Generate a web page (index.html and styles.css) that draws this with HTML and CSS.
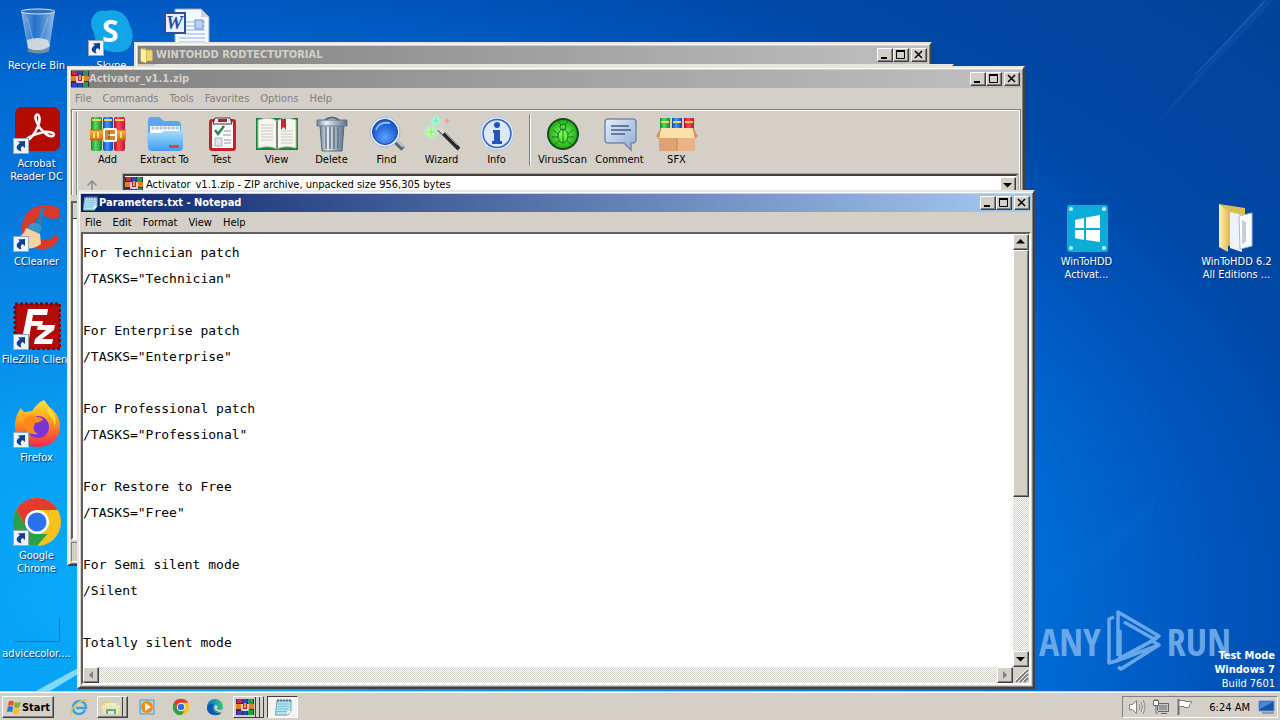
FILE: index.html
```html
<!DOCTYPE html>
<html lang="en">
<head>
<meta charset="utf-8">
<meta name="viewport" content="width=device-width, initial-scale=1">
<title>Desktop</title>
<link rel="stylesheet" href="styles.css">
</head>
<body>
<svg class="sprite" aria-hidden="true">
  <defs>
    <linearGradient id="g-red" x2="1" y2="0"><stop stop-color="#a80f22"/><stop offset=".4" stop-color="#ff4a55"/><stop offset="1" stop-color="#c01530"/></linearGradient>
    <linearGradient id="g-blue" x2="1" y2="0"><stop stop-color="#0d47b5"/><stop offset=".4" stop-color="#3f9bff"/><stop offset="1" stop-color="#0d47b5"/></linearGradient>
    <linearGradient id="g-green" x2="1" y2="0"><stop stop-color="#0b8a2a"/><stop offset=".4" stop-color="#5bdc5b"/><stop offset="1" stop-color="#0b8a2a"/></linearGradient>
    <linearGradient id="g-belt" x2="0" y2="1"><stop stop-color="#ffb43a"/><stop offset="1" stop-color="#d86a0c"/></linearGradient>
    <linearGradient id="g-folder" x2="0" y2="1"><stop stop-color="#a4dcff"/><stop offset="1" stop-color="#3e9cf0"/></linearGradient>
    <linearGradient id="g-metal" x2="1" y2="0"><stop stop-color="#6f8296"/><stop offset=".3" stop-color="#e8f0f6"/><stop offset=".6" stop-color="#a9b8c6"/><stop offset="1" stop-color="#5f7286"/></linearGradient>
    <linearGradient id="g-yellow" x2="1" y2="0"><stop stop-color="#fff3b0"/><stop offset="1" stop-color="#e3c45a"/></linearGradient>
    <linearGradient id="g-fox" x2="0" y2="1"><stop stop-color="#ffe23a"/><stop offset=".45" stop-color="#ff9a1c"/><stop offset="1" stop-color="#f0264e"/></linearGradient>
    <linearGradient id="g-bin" x2="1" y2="0"><stop stop-color="#b5cfea" stop-opacity=".8"/><stop offset=".4" stop-color="#4a86cf" stop-opacity=".5"/><stop offset="1" stop-color="#c9dcf0" stop-opacity=".75"/></linearGradient>
    <linearGradient id="g-bubble" x2="1" y2="1"><stop stop-color="#e6effa"/><stop offset="1" stop-color="#8eaad2"/></linearGradient>
    <linearGradient id="g-edge" x2="1" y2="0"><stop stop-color="#0a6cd0"/><stop offset="1" stop-color="#38c878"/></linearGradient>
    <radialGradient id="g-lens" cy=".7"><stop stop-color="#5fa2ff"/><stop offset="1" stop-color="#1c5fd0"/></radialGradient>
    <radialGradient id="g-virus"><stop stop-color="#8cff5c"/><stop offset="1" stop-color="#22ae1c"/></radialGradient>
    <radialGradient id="g-glow"><stop stop-color="#fff"/><stop offset=".4" stop-color="#a8ffc0"/><stop offset="1" stop-color="#a8ffc0" stop-opacity="0"/></radialGradient>
    <symbol id="shortcut" viewBox="0 0 16 16"><rect x=".5" y=".5" width="15" height="15" fill="#eef3fa" stroke="#9aa8bb"/><path d="M5 3.500 12 3v7L9.600 8Q6.500 9.500 8.500 13.500 3 12 3.800 8.500 4.500 6.500 6.800 5.500z" fill="#103f94"/></symbol>
    <symbol id="books" viewBox="0 0 36 36">
      <rect x="1" y="1" width="11" height="34" rx="2" fill="url(#g-green)"/><rect x="13" y="1" width="10" height="34" rx="2" fill="url(#g-blue)"/><rect x="24" y="1" width="11" height="34" rx="2" fill="url(#g-red)"/>
      <path d="M2 4h9M14 4h8M25 4h9" stroke="#ffd24a" stroke-width="2"/>
      <path d="M0 14h36v10H0z" fill="url(#g-belt)"/><path d="M0 14h36M0 24h36" stroke="#c06a18"/><path d="M4 16v6M8 16v6M31 16v6" stroke="#ffe08a" stroke-width="2"/>
      <rect x="14" y="13" width="12" height="12" rx="1" fill="#d8882c" stroke="#fff" stroke-width="2"/><path d="M18 19h9" stroke="#fff" stroke-width="2"/><path d="M19 15v8" stroke="#6b3a12"/>
    </symbol>
    <symbol id="rar" viewBox="0 0 18 16">
      <path d="M0 0h18v16H0z" fill="#40245c"/><path d="M1 0h5v4H1z" fill="#d61f52"/><path d="M7 0h4v16H7z" fill="#2449c8"/><path d="M12 0h5v5h-5zM12 11h5v5h-5z" fill="#1fa044"/><path d="M1 12h5v4H1z" fill="#2a4bd0"/><path d="M0 5h18v5H0z" fill="#b62530"/><path d="M0 5h5v5H0zM13 5h5v5h-5z" fill="#e08124"/><path d="M6 5v6h6V5" fill="none" stroke="#fff" stroke-width="1.500"/><path d="M9 4v5" stroke="#f5c84c" stroke-width="1.500"/>
    </symbol>
    <symbol id="note" viewBox="0 0 18 18"><path d="M3 2.500h14v10L14 17H1.500z" fill="#b4e4f0" stroke="#6f9db0"/><path d="M4 6h11M4 8.500h11M3.500 11H14M3 13.500h10" stroke="#7dbdd6"/><path d="M4 1v3M7 1v3M10 1v3M13 1v3M16 1v3" stroke="#45606c"/><path d="m13 17 .5-4H17z" fill="#fff"/></symbol>
    <symbol id="folder" viewBox="0 0 16 18"><path d="M1 2l5-1 2 2h6v13H5l-4 1z" fill="#d8b64a"/><path d="M1 2l6 2v14l-6-2z" fill="#fff0a0"/><path d="M8 4h6v11H8z" fill="#f0d47a"/></symbol>
    <symbol id="chrome" viewBox="0 0 48 48"><circle cx="24" cy="24" r="24" fill="#f8c21e"/><path d="M3.200 12A24 24 0 0 1 44.800 12H24L13.600 30z" fill="#e33b2e"/><path d="M3.200 12 13.600 30 24 36h10.400L24 48A24 24 0 0 1 3.200 12z" fill="#28a148"/><circle cx="24" cy="24" r="12" fill="#fff"/><circle cx="24" cy="24" r="9.500" fill="#2b72ea"/></symbol>
    <symbol id="min" viewBox="0 0 16 14"><path d="M4 10h6" stroke="#000" stroke-width="2"/></symbol>
    <symbol id="max" viewBox="0 0 16 14"><path d="M3.500 2.500h8v8h-8z" fill="none" stroke="#000"/><path d="M3 3h9" stroke="#000" stroke-width="2"/></symbol>
    <symbol id="close" viewBox="0 0 16 14"><path d="m4 3 7 7M11 3l-7 7" stroke="#000" stroke-width="1.500"/></symbol>
    <symbol id="up" viewBox="0 0 16 16"><path d="M7.500 5 12 9.500H3z"/></symbol>
    <symbol id="down" viewBox="0 0 16 16"><path d="M3 6h9l-4.500 4.500z"/></symbol>
    <symbol id="left" viewBox="0 0 16 16"><path d="M10 4v8L6 8z" fill="#808080"/></symbol>
    <symbol id="right" viewBox="0 0 16 16"><path d="M6 4v8l4-4z" fill="#808080"/></symbol>
  </defs>
</svg>

<main class="desktop">
  <svg class="streaks" viewBox="0 0 1280 691" preserveAspectRatio="none" aria-hidden="true">
    <path d="M1035 575Q1110 540 1160 490L1150 520Q1100 570 1035 600z" fill="#2a90f0" opacity=".06"/>
    <path d="M1150 130 1262 0h12L1180 100z" fill="#6ab4ff" opacity=".07"/>
    <path d="M1195 75 1265 1" stroke="#9cccff" opacity=".25"/>
    <path d="M36 691 78 668v6L50 691z" fill="#a8ecff" opacity=".75"/>
  </svg>

  <div class="icons">
    <a class="shortcut" href="#bin">
      <svg viewBox="0 0 48 48"><path d="M8 3h34l-6 39q-11 5-21 0z" fill="url(#g-bin)"/><path d="M14 32q11-4 21 0l2 6q-12 8-22 2z" fill="#e4e6df" opacity=".85"/><ellipse cx="25" cy="3.500" rx="17" ry="2.500" fill="#3b6fae" stroke="#d6e6f5"/><path d="M15 42q10 4 21 0" fill="none" stroke="#7c8b99" stroke-width="3"/><path d="m14 10 6 22M35 10l-7 20" stroke="#bcd7f3" opacity=".5"/></svg>
      <span>Recycle Bin</span></a>
    <a class="shortcut" href="#skype">
      <svg viewBox="0 0 48 48"><path d="M17 3q20-4 25 15 4 6 2 14-2 13-16 12Q8 44 6 25 0 14 6 7q4-5 11-4z" fill="#12a5e8"/><text class="skype-letter" x="14" y="34">S</text><use href="#shortcut" y="32" width="16" height="16"/></svg>
      <span>Skype</span></a>
    <a class="shortcut" href="#word" aria-label="Word document">
      <svg viewBox="0 0 48 48"><path d="M12 1h26l8 8v38H12z" fill="#f4f8ff" stroke="#8fa4c4"/><path d="M38 1v8h8z" fill="#c4d3e8"/><path d="M22 14h20M22 18h20M22 22h20M22 26h20M16 30h26M16 34h26M16 38h26" stroke="#8db0e0"/><path d="M32 12h8v9h-8z" fill="#b8d0f4" stroke="#6a94d4"/><path d="M2 5h20v20H2z" fill="#eaf1fd" stroke="#2b4d9e" stroke-width="2"/><text class="word-letter" x="3" y="21">W</text></svg></a>
    <a class="shortcut col-1" href="#acrobat">
      <svg viewBox="0 0 48 48"><rect x="2" y="1" width="45" height="44" rx="7" fill="#b30b00"/><path d="M13 34c5 1 16-16 13-24-1-3-5-1-3 4 2 8 12 18 17 16 4-3-6-6-13-3-8 2-14 6-14 7z" fill="none" stroke="#fff" stroke-width="2.500"/><use href="#shortcut" y="32" width="16" height="16"/></svg>
      <span>Acrobat Reader DC</span></a>
    <a class="shortcut col-1" href="#ccleaner">
      <svg viewBox="0 0 48 48"><path d="M46 5 46 14 38 15Q28 8 22 18q-5 16 8 18 8 1 12-6l4 5Q40 46 28 45 8 44 9 22 12 2 32 1q7-1 14 4z" fill="#d8392a"/><path d="m30 4-6 24" stroke="#2f7fae" stroke-width="4"/><path d="M17 20q8-4 12 4l-3 6-13-4z" fill="#3a93c2"/><path d="M13 24 27 30l1 10q-8 6-18 4Q5 37 2 35q8-2 11-11z" fill="#f4d3a0"/><use href="#shortcut" y="32" width="16" height="16"/></svg>
      <span>CCleaner</span></a>
    <a class="shortcut col-1" href="#filezilla">
      <svg viewBox="0 0 48 48"><rect x="2" y="2" width="45" height="45" fill="#b30a0a" stroke="#7d0505" stroke-width="3" stroke-dasharray="3 2"/><path d="M15 7h20l-1 6H20l-1 6h11l-1 5H18l-2 13H9z" fill="#fff"/><path d="M25 23h17l-1 5-12 9h11l-1 5H21l1-5 11-9h-9z" fill="#fff"/><use href="#shortcut" y="32" width="16" height="16"/></svg>
      <span class="nowrap">FileZilla Client</span></a>
    <a class="shortcut col-1" href="#firefox">
      <svg viewBox="0 0 48 48"><path d="M31 0q3 6 8 9 9 8 8 20-3 17-22 18Q5 46 2 29 1 17 8 8q1 3 4 4l7-1q5-8 12-11z" fill="url(#g-fox)"/><circle cx="25" cy="27" r="11" fill="#7a35d5"/><path d="M12 18q8-5 12-1 5 0 6 3-5 3-8 3-4 8 3 11-11 2-14-8z" fill="#ff8a1a"/><path d="M31 0q2 12 8 18 3 6 2 10 4-10-2-17" fill="#ffd93a"/><use href="#shortcut" y="32" width="16" height="16"/></svg>
      <span>Firefox</span></a>
    <a class="shortcut col-1" href="#chrome-app">
      <svg viewBox="0 0 48 48"><use href="#chrome" width="48" height="48"/><use href="#shortcut" y="32" width="16" height="16"/></svg>
      <span>Google Chrome</span></a>
    <a class="shortcut col-1" href="#advice">
      <svg viewBox="0 0 48 48"><path d="M2 45.500h44.500V22" fill="none" stroke="#0c5f9c" opacity=".75"/></svg>
      <span class="nowrap">advicecolor....</span></a>
    <a class="shortcut col-15" href="#activator">
      <svg viewBox="0 0 48 48"><rect x="4" y="1" width="41" height="47" rx="2" fill="#0bacd8"/><g fill="#c9f4ff"><circle cx="8" cy="5" r="2"/><circle cx="41" cy="5" r="2"/><circle cx="8" cy="44" r="2"/><circle cx="41" cy="44" r="2"/></g><path d="m12 16 9-2v10h-9zM23 13.500 37 11v13H23zM12 26h9v10l-9-2zM23 26h14v12l-14-2z" fill="#fff"/></svg>
      <span>WinToHDD Activat...</span></a>
    <a class="shortcut col-17" href="#editions">
      <svg viewBox="0 0 48 48"><path d="m6 0 26 4v32l-22 8z" fill="#d9bd55"/><path d="m17 8 12 3v37l-12-4z" fill="#eef3fb"/><path d="m26 12 13-3v33l-12 3z" fill="#fdfeff" stroke="#aab9d0"/><path d="M29 16v24l4-2V18z" fill="#c5cfe0"/><path d="m6 0 9 7v41l-9-5z" fill="url(#g-yellow)"/></svg>
      <span>WinToHDD 6.2 All Editions ...</span></a>
  </div>

  <div class="brand" aria-label="ANY RUN"><span>ANY</span>
    <svg viewBox="0 0 56 62" aria-hidden="true"><g fill="none" stroke="currentColor" stroke-width="3.500" stroke-linejoin="round"><path d="M8 7 3 9v44l7-2 41-23"/><path d="M12 46V2l41 24-5 3-30-17"/><path d="M10 51 53 35 15 59l-3-2M53 35 46 31 14 48V20"/></g></svg>
    <span>RUN</span></div>
  <div class="build"><strong>Test Mode</strong><strong>Windows 7</strong><span>Build 7601</span></div>

  <section class="window explorer" aria-label="WINTOHDD RODTECTUTORIAL">
    <header class="titlebar"><svg class="title-icon"><use href="#folder"/></svg><h2>WINTOHDD RODTECTUTORIAL</h2>
      <button aria-label="Minimize"><svg><use href="#min"/></svg></button><button aria-label="Maximize"><svg><use href="#max"/></svg></button><button class="close" aria-label="Close"><svg><use href="#close"/></svg></button></header>
  </section>
  <section class="window hidden-window" aria-label="Background window"></section>

  <section class="window archive" aria-label="Activator_v1.1.zip">
    <header class="titlebar"><svg class="title-icon"><use href="#rar"/></svg><h2>Activator_v1.1.zip</h2>
      <button aria-label="Minimize"><svg><use href="#min"/></svg></button><button aria-label="Maximize"><svg><use href="#max"/></svg></button><button class="close" aria-label="Close"><svg><use href="#close"/></svg></button></header>
    <nav class="menu faded"><button>File</button><button>Commands</button><button>Tools</button><button>Favorites</button><button>Options</button><button>Help</button></nav>
    <div class="rebar">
      <div class="toolbar">
        <button class="tool"><svg viewBox="0 0 36 36"><use href="#books"/></svg>Add</button>
        <button class="tool wide"><svg viewBox="0 0 36 36"><path d="M1 5q0-4 4-4h7l5 4h13q4 0 4 4v20H1z" fill="#5aa5f5"/><path d="M3 10h30v12H3z" fill="#fff"/><path d="M4 12h28M6 10v4M10 10v4M14 10v4M18 10v4M22 10v4M26 10v4M30 10v4" stroke="#98b6dc"/><path d="M0 19q0-2 2-2h12l3-2h17q2 0 2 2v14q0 4-4 4H5q-4 0-4-4z" fill="url(#g-folder)"/><path d="M22 29h10v3H22z" fill="#d24a38"/></svg>Extract To</button>
        <button class="tool"><svg viewBox="0 0 36 36"><rect x="5" y="3" width="27" height="32" rx="3" fill="#c5222e"/><path d="M8 6h21v26H8z" fill="#f8fafb"/><path d="M11 2h15l2 6H9z" fill="#e8eaec" stroke="#5a3038"/><path d="M14 3h9v3h-9z" fill="#9c2834"/><path d="m11 14 3 4 6-8" fill="none" stroke="#2d8450" stroke-width="2.500"/><path d="M20 15h7M19 19h8M20 24h7M20 27h7" stroke="#8d98a2"/><path d="M11 22h7v8h-7z" fill="#dde3e8" stroke="#aab4bc"/></svg>Test</button>
        <button class="tool"><svg class="book" viewBox="0 0 42 36"><path d="M0 2h42v32H0z" fill="#16853a"/><path d="M2 4q12-4 19 1 7-5 19-1v28q-12-3-19 1-7-4-19-1z" fill="#f6f6ee" stroke="#b7bfae"/><path d="M21 5v28" stroke="#7c8478" stroke-width="2"/><path d="M5 9h12M5 12h12M5 15h12M5 18h12M5 21h12M5 24h12M25 15h12M25 18h12M25 21h12M25 24h12M25 27h12" stroke="#c5cabf"/><path d="M25 3h5v11l-2.500-3-2.500 3z" fill="#cf2438"/></svg>View</button>
        <button class="tool"><svg viewBox="0 0 36 36"><path d="M6 9h24l-2 26H8z" fill="url(#g-metal)" stroke="#59697a"/><path d="M12 11v22M16 11v22M20 11v22M24 11v22" stroke="#637589" stroke-width="1.500"/><path d="M3 4h30v6H3z" fill="url(#g-metal)" stroke="#64788c"/><path d="M11 4q7-5 14 0" fill="none" stroke="#54667a" stroke-width="2"/></svg>Delete</button>
        <button class="tool"><svg viewBox="0 0 36 36"><path d="m24 23 10 10" stroke="#59636c" stroke-width="5"/><path d="m25 22 9 9" stroke="#bbc4cc" stroke-width="2"/><circle cx="16" cy="16" r="15" fill="#eaf2fb" stroke="#a2b5cc"/><circle cx="16" cy="16" r="12.500" fill="url(#g-lens)" stroke="#13409a"/><path d="M7 14q3-9 14-7" fill="none" stroke="#86b8ff" stroke-width="2"/></svg>Find</button>
        <button class="tool"><svg viewBox="0 0 36 36"><circle cx="7" cy="16" r="8" fill="url(#g-glow)"/><circle cx="12" cy="5" r="6" fill="url(#g-glow)"/><path d="m7 11 1 4 4 1-4 1-1 4-1-4-4-1 4-1z" fill="#a9ee45"/><path d="m12 1 1 3 3 1-3 1-1 3-1-3-3-1 3-1z" fill="#6be8ec"/><path d="m23 2 1 2 2 1-2 1-1 2-1-2-2-1 2-1z" fill="#f598a2"/><path d="m15 13 20 20" stroke="#282828" stroke-width="4"/><path d="m15 12 5 5" stroke="#d8d8d8" stroke-width="4"/><path d="m20 16 13 13" stroke="#8c8c8c"/></svg>Wizard</button>
        <button class="tool"><svg viewBox="0 0 36 36"><circle cx="18" cy="17.500" r="16.500" fill="#e7effc" stroke="#b5c7e8"/><circle cx="18" cy="17.500" r="14" fill="#dce8fb" stroke="#3262c4" stroke-width="1.500"/><circle cx="18" cy="9" r="3" fill="#2453bc"/><path d="M14 14h7v11h2v3H13v-3h2v-8h-1z" fill="#2453bc"/></svg>Info</button>
        <span class="divider"></span>
        <button class="tool"><svg viewBox="0 0 36 36"><circle cx="18" cy="18" r="16" fill="#164c24"/><circle cx="18" cy="18" r="14" fill="url(#g-virus)"/><g stroke="#12791b" fill="none"><ellipse cx="18" cy="20" rx="5" ry="7"/><circle cx="18" cy="11" r="3"/><path d="M18 14v13M13 18 8 14M13 21H7M14 25l-5 4M23 18l5-4M23 21h6M22 25l5 4M16 9l-3-4M20 9l3-4"/></g></svg>VirusScan</button>
        <button class="tool wide"><svg viewBox="0 0 36 36"><path d="M6 3h25q3 0 3 3v17q0 4-3 4h-2v7l-7-7H6q-3 0-3-4V6q0-3 3-3z" fill="url(#g-bubble)" stroke="#7289ae" stroke-width="1.500"/><path d="M9 10h18M9 14h20M9 18h14" stroke="#455d85" stroke-width="1.500"/></svg>Comment</button>
        <button class="tool"><svg class="book" viewBox="0 0 42 36"><path d="M4 2h10v14H4z" fill="url(#g-green)"/><path d="M16 2h10v14H16z" fill="url(#g-blue)"/><path d="M28 2h10v14H28z" fill="url(#g-red)"/><path d="M5 6h8M17 6h8M29 6h8" stroke="#ffd84f" stroke-width="2"/><path d="M3 17h36v18H3z" fill="#e0a270"/><path d="M21 17h18v18H21z" fill="#edb387"/><path d="M5 12h32l2 10H3z" fill="#fbe0aa"/><path d="M5 12 0 20l3 3M37 12l5 8-3 3" fill="#d99257"/><path d="M21 22v13" stroke="#c98555"/></svg>SFX</button>
      </div>
      <div class="address-row">
        <button class="up-level" aria-label="Up one level"><svg viewBox="0 0 16 16"><path d="M8 15V4M3.500 8.500 8 4l4.500 4.500" fill="none" stroke="#8c8c8c" stroke-width="1.500"/></svg></button>
        <div class="address"><svg class="title-icon"><use href="#rar"/></svg><input aria-label="Archive path" value="Activator_v1.1.zip - ZIP archive, unpacked size 956,305 bytes" readonly><button class="arrow" aria-label="Show paths"><svg><use href="#down"/></svg></button></div>
      </div>
    </div>
    <div class="file-list"><div class="list-head"></div></div>
    <footer class="status"></footer>
  </section>

  <section class="window notepad" aria-label="Parameters.txt - Notepad">
    <header class="titlebar active"><svg class="title-icon"><use href="#note"/></svg><h2>Parameters.txt - Notepad</h2>
      <button aria-label="Minimize"><svg><use href="#min"/></svg></button><button aria-label="Maximize"><svg><use href="#max"/></svg></button><button class="close" aria-label="Close"><svg><use href="#close"/></svg></button></header>
    <nav class="menu"><button>File</button><button>Edit</button><button>Format</button><button>View</button><button>Help</button></nav>
    <div class="editor">
      <textarea aria-label="Document text" spellcheck="false" wrap="off">For Technician patch
/TASKS="Technician"

For Enterprise patch
/TASKS="Enterprise"

For Professional patch
/TASKS="Professional"

For Restore to Free
/TASKS="Free"

For Semi silent mode
/Silent

Totally silent mode</textarea>
      <div class="scroll vertical"><button class="arrow" aria-label="Scroll up"><svg><use href="#up"/></svg></button><div class="thumb"></div><button class="arrow end" aria-label="Scroll down"><svg><use href="#down"/></svg></button></div>
      <div class="scroll horizontal"><button class="arrow" aria-label="Scroll left"><svg><use href="#left"/></svg></button><button class="arrow end" aria-label="Scroll right"><svg><use href="#right"/></svg></button></div>
      <svg class="grip" viewBox="0 0 16 16" aria-hidden="true"><path d="M3 15 15 3M7 15l8-8M11 15l4-4" stroke="#808080" stroke-width="2"/><path d="M1 15 15 1M5 15 15 5M9 15l6-6" stroke="#fff"/></svg>
    </div>
  </section>
</main>

<footer class="taskbar">
  <button class="start"><svg viewBox="0 0 18 18"><path d="M3 3q3-2 6 0L8 8Q5 6 2 8z" fill="#ee5526"/><path d="M10 3q3 2 7 0l-2 6q-3 2-6 0z" fill="#7ab837"/><path d="M2 9q3-2 6 0l-1 6q-3-2-6 0z" fill="#3278d2"/><path d="M9 10q3 2 6 0l-1 6q-3 2-6 0z" fill="#fbbb28"/></svg>Start</button>
  <div class="apps">
    <button aria-label="Internet Explorer"><svg viewBox="0 0 18 18"><path d="M15 12q-2 4-6 4-6 0-6-7 1-6 7-6 6 1 6 7H6" fill="none" stroke="#3ba3e4" stroke-width="2.500"/><path d="M2 16Q-1 12 8 5q8-5 9-2" fill="none" stroke="#f0c33b" stroke-width="1.500"/></svg></button>
    <button class="open stack" aria-label="File Explorer"><svg viewBox="0 0 18 18"><path d="M1 3h6l1 2h8v11H1z" fill="#e9cd6b"/><path d="M3 5h12v7H3z" fill="#dff0de"/><path d="M0 7h18l-1 9H1z" fill="#f7e6a0"/><path d="M5 16v-4h8v4" fill="none" stroke="#4eabc5" stroke-width="2"/></svg></button>
    <button aria-label="Media Player"><svg viewBox="0 0 18 18"><path d="M2 2h14v14H2z" fill="#a9d6ee" stroke="#4a9cc4"/><circle cx="9" cy="9" r="6" fill="#f28b14"/><path d="M7 5v8l6-4z" fill="#fff"/></svg></button>
    <button aria-label="Chrome"><svg viewBox="-2 -2 52 52"><use href="#chrome" width="48" height="48"/></svg></button>
    <button aria-label="Edge"><svg viewBox="0 0 18 18"><circle cx="9" cy="9" r="8" fill="url(#g-edge)"/><path d="M8 6q-4 7 3 9 3 1 5-1-3 4-8 3-7-1-7-7 2-5 7-4z" fill="#0a57b0"/><path d="M9 7q4 0 2 4 3 2 6 0l1 3q-4 1-7-1-4-2-2-6z" fill="#d4d0c8"/></svg></button>
    <button class="open stack double" aria-label="WinRAR"><svg viewBox="0 0 18 18"><use href="#rar" y="1" width="18" height="16"/></svg></button>
    <button class="pressed" aria-label="Notepad"><svg viewBox="0 0 18 18"><use href="#note" width="18" height="18"/></svg></button>
  </div>
  <div class="tray">
    <svg viewBox="0 0 18 18"><path d="M1.500 6.500h3l4-4v13l-4-4h-3z" fill="#fff" stroke="#808080"/><path d="M11 6q2 3 0 6M13 4q3 5 0 10M15 2q4 7 0 14" fill="none" stroke="#909090"/></svg>
    <svg viewBox="0 0 18 18"><path d="M5.500 5.500h11v8h-11z" fill="#c8c8c8" stroke="#666"/><path d="M7 7h8v5H7z" fill="#999"/><path d="M1.500 2.500h5v5h-5zM3 1v2M5 1v2M4 8v7h2M9 15.500h6" fill="#fff" stroke="#666"/></svg>
    <svg viewBox="0 0 18 18"><path d="M2.500 1v16" stroke="#707070" stroke-width="2"/><path d="M3 2.500h6v1h7q-3 3-3 6H8v-1H3z" fill="#fff" stroke="#808080"/></svg>
    <time>6:24 AM</time>
    <button class="show-desktop" aria-label="Show desktop"><svg viewBox="0 0 18 18"><path d="M1 3h15v10H1z" fill="#1651aa" stroke="#6c94c8"/><path d="M2 4h13L2 11z" fill="#4289dc"/><path d="M4 15h12" stroke="#8e9cab" stroke-width="2"/></svg></button>
  </div>
</footer>
</body>
</html>
```
FILE: styles.css
```css
* { box-sizing: border-box; }
html, body { height: 100%; margin: 0; }
body {
  display: grid;
  grid-template-rows: minmax(0, 1fr) 29px;
  overflow: hidden;
  color: #000;
  font: 11px/13px Tahoma, "DejaVu Sans Condensed", "DejaVu Sans", sans-serif;
}
button, input, textarea { margin: 0; padding: 0; border: 0; border-radius: 0; background: none; color: inherit; font: inherit; }
button { display: flex; align-items: center; justify-content: center; }
h2 { margin: 0; font-size: 11px; line-height: 18px; }
.sprite { position: absolute; width: 0; height: 0; }

.desktop {
  position: relative;
  overflow: hidden;
  background: radial-gradient(ellipse 97% 100% at 10% 86%, #08aafa 0, #08a0f4 22%, #0788e6 42%, #0676dc 60%, #0068d2 76%, #0055bc 88%, #0048a6 100%, #00439a 125%);
}
.streaks { position: absolute; inset: 0; width: 100%; height: 100%; }

.icons {
  position: relative;
  display: grid;
  grid-template-columns: repeat(17, 75px);
  grid-auto-rows: 98px;
  grid-auto-flow: row dense;
  margin-left: -1px;
  padding-top: 8px;
}
.shortcut {
  display: flex;
  flex-direction: column;
  align-items: center;
  gap: 3px;
  color: #fff;
  text-align: center;
  text-decoration: none;
  text-shadow: 1px 1px 1px #003070;
}
.shortcut svg { width: 48px; height: 48px; flex: none; }
.shortcut span { width: 74px; }
.shortcut .nowrap { white-space: nowrap; }
.col-1 { grid-column: 1; }
.col-15 { grid-column: 15; grid-row: 3; }
.col-17 { grid-column: 17; grid-row: 3; }
.skype-letter { fill: #fff; font: bold 30px "Open Sans", sans-serif; text-shadow: none; }
.word-letter { fill: #2b4d9e; font: italic bold 19px "Liberation Serif", serif; text-shadow: none; }

.brand {
  position: absolute;
  right: 49px;
  bottom: 18px;
  display: flex;
  align-items: center;
  gap: 5px;
  color: #83b9f0;
  opacity: .8;
  font: 38px/64px "Liberation Sans Narrow", "Open Sans Condensed", "DejaVu Sans Condensed", sans-serif;
}
.brand svg { width: 56px; height: 62px; }
.build {
  position: absolute;
  right: 5px;
  bottom: 0;
  display: flex;
  flex-direction: column;
  align-items: flex-end;
  color: #fff;
  line-height: 14px;
}

.window {
  position: absolute;
  display: flex;
  flex-direction: column;
  padding: 2px;
  border: 2px solid;
  border-color: #e8e5de #404040 #404040 #e8e5de;
  background: #d4d0c8;
  box-shadow: inset 1px 1px #fff, inset -1px -1px #808080;
}
.explorer { top: 42px; right: 348px; bottom: 140px; left: 134px; }
.hidden-window { top: 64px; right: 326px; bottom: 140px; left: 155px; }
.archive { top: 66px; right: 255px; bottom: 125px; left: 67px; }
.notepad { top: 190px; right: 245px; bottom: 2px; left: 77px; }

.titlebar {
  display: flex;
  flex: none;
  align-items: center;
  height: 18px;
  padding-right: 1px;
  background: linear-gradient(90deg, #808080, #c0c0c0);
  color: #d4d0c8;
}
.titlebar.active { background: linear-gradient(90deg, #0a246a, #a6caf0); color: #fff; }
.titlebar h2 { flex: 1; }
.title-icon { width: 18px; height: 16px; flex: none; }
.titlebar button, .arrow {
  width: 16px;
  height: 14px;
  border: 1px solid;
  border-color: #fff #404040 #404040 #fff;
  background: #d4d0c8;
  box-shadow: inset -1px -1px #808080;
}
.titlebar button svg { width: 16px; height: 14px; flex: none; }
.titlebar .close { margin-left: 2px; }

.menu { display: flex; flex: none; gap: 11px; height: 20px; padding-left: 4px; }
.faded { color: #808080; }

.rebar { flex: none; margin: 1px 0 0; padding: 2px 2px 0 4px; border: 1px solid #808080; border-bottom: 0; box-shadow: inset 1px 1px #fff, inset -1px 0 #fff; }
.toolbar { display: flex; height: 62px; padding-left: 3px; border-left: 1px solid #808080; box-shadow: inset 1px 0 #fff; }
.tool { flex-direction: column; justify-content: flex-start; gap: 1px; width: 55px; padding-top: 4px; }
.tool.wide { width: 59px; }
.tool svg { width: 36px; height: 36px; }
.tool .book { width: 42px; }
.divider { width: 2px; height: 52px; margin: 2px 4px 2px 5px; border-left: 1px solid #808080; background: #fff; }
.address-row { display: flex; height: 21px; border-left: 1px solid #808080; box-shadow: inset 1px 0 #fff; }
.up-level { width: 30px; }
.up-level svg { width: 16px; height: 16px; }
.address { display: flex; flex: 1; align-items: center; margin-left: 16px; border: 2px solid; border-color: #404040 #d4d0c8 #d4d0c8 #404040; background: #fff; outline: 1px solid #aaa69e; }
.address input { flex: 1; padding-left: 3px; }
.arrow { width: 16px; height: 16px; flex: none; }
.arrow svg { width: 16px; height: 16px; flex: none; }
.file-list { flex: 1; margin-top: 6px; border: 2px solid; border-color: #606060 #fff #fff #606060; background: #fff; }
.list-head { height: 16px; border-bottom: 1px solid #404040; background: #d4d0c8; }
.status { height: 20px; flex: none; margin-top: 2px; border: 1px solid; border-color: #808080 #fff #fff #808080; }

.editor {
  display: grid;
  flex: 1;
  grid-template: minmax(0, 1fr) 16px / minmax(0, 1fr) 16px;
  min-height: 0;
  border: 2px solid;
  border-color: #606060 #fff #fff #606060;
  background: #d4d0c8;
}
.editor textarea {
  width: 100%;
  height: 100%;
  padding-top: 6px;
  overflow: hidden;
  resize: none;
  outline: 0;
  background: #fff;
  font: 13px/26px "Lucida Console", "DejaVu Sans Mono", monospace;
}
.scroll { display: flex; background: repeating-conic-gradient(#fff 0 25%, #d4d0c8 0 50%) 0 0 / 2px 2px; }
.vertical { flex-direction: column; }
.end { margin-top: auto; }
.horizontal .end { margin: 0 0 0 auto; }
.thumb { height: 57%; border: 1px solid; border-color: #fff #404040 #404040 #fff; background: #d4d0c8; box-shadow: inset -1px -1px #808080; }
.grip { width: 16px; height: 16px; }

.taskbar { display: flex; align-items: center; padding: 3px 2px 1px; border-top: 1px solid #d4d0c8; background: #d4d0c8; box-shadow: inset 0 1px #fff; }
.start, .apps .open {
  border: 1px solid;
  border-color: #fff #404040 #404040 #fff;
  box-shadow: inset -1px -1px #808080;
}
.start { width: 52px; height: 22px; font-weight: bold; }
.start svg { width: 16px; height: 18px; flex: none; }
.apps { display: flex; flex: 1; gap: 3px; padding-left: 9px; }
.apps button { width: 31px; height: 22px; }
.apps svg { width: 18px; height: 18px; flex: none; }
.apps .stack { padding-right: 4px; box-shadow: inset -1px -1px #808080, inset -4px 0 #d4d0c8, inset -5px 0 #404040; }
.apps .double { padding-right: 7px; box-shadow: inset -3px 0 #d4d0c8, inset -4px 0 #404040, inset -7px 0 #d4d0c8, inset -8px 0 #404040; }
.apps .pressed { border: 1px solid; border-color: #404040 #fff #fff #404040; background: #f4f3f0; }
.tray { display: flex; align-items: center; gap: 6px; height: 22px; padding: 0 1px 0 5px; border: 1px solid; border-color: #808080 #fff #fff #808080; }
.tray svg { width: 18px; height: 18px; }
.tray time { margin-left: 9px; }
.show-desktop { margin-left: 2px; }
```
